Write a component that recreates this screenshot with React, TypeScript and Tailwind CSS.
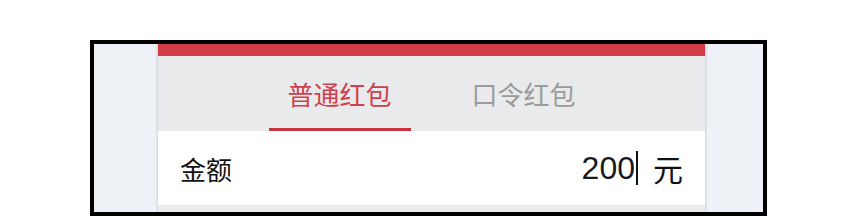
import { useState } from "react";

const tabs = ["普通红包", "口令红包"];

export default function App() {
  const [active, setActive] = useState(0);

  return (
    <div className="w-[850px] h-[217px] bg-white pt-[40px] pl-[90px] overflow-hidden font-['Noto_Sans_CJK_SC','Noto_Sans',sans-serif]">
      <div className="w-[677px] h-[176px] border-4 border-black bg-[#eef2f7] pl-[64px]">
        <div className="w-[547px] h-full flex flex-col bg-[#ebecee] shadow-[0_0_3px_rgba(0,0,0,0.25)]">
          <div className="h-[12px] bg-[#d23b48]" />
          <div className="h-[75px] bg-[#e9eaec] flex justify-center">
            {tabs.map((t, i) => (
              <button
                key={t}
                onClick={() => setActive(i)}
                className="w-[184px] flex flex-col items-center justify-end"
              >
                <span
                  className={`text-[26px] leading-none mb-[21px] ${
                    i === active ? "text-[#d0404c]" : "text-[#9b9b9b]"
                  }`}
                >
                  {t}
                </span>
                <span
                  className={`h-[3px] w-[142px] ${i === active ? "bg-[#c9313e]" : "bg-transparent"}`}
                />
              </button>
            ))}
          </div>
          <div className="h-[74px] bg-white flex items-center justify-between pl-[22px] pr-[22px]">
            <span className="text-[26px] text-[#111]">金额</span>
            <div className="flex items-center">
              <span className="text-[32px] text-[#1a1a1a] font-['Liberation_Sans',sans-serif]">200</span>
              <span className="w-[2px] h-[34px] bg-[#111] ml-[1px]" />
              <span className="text-[30px] text-[#111] ml-[15px]">元</span>
            </div>
          </div>
        </div>
      </div>
    </div>
  );
}
